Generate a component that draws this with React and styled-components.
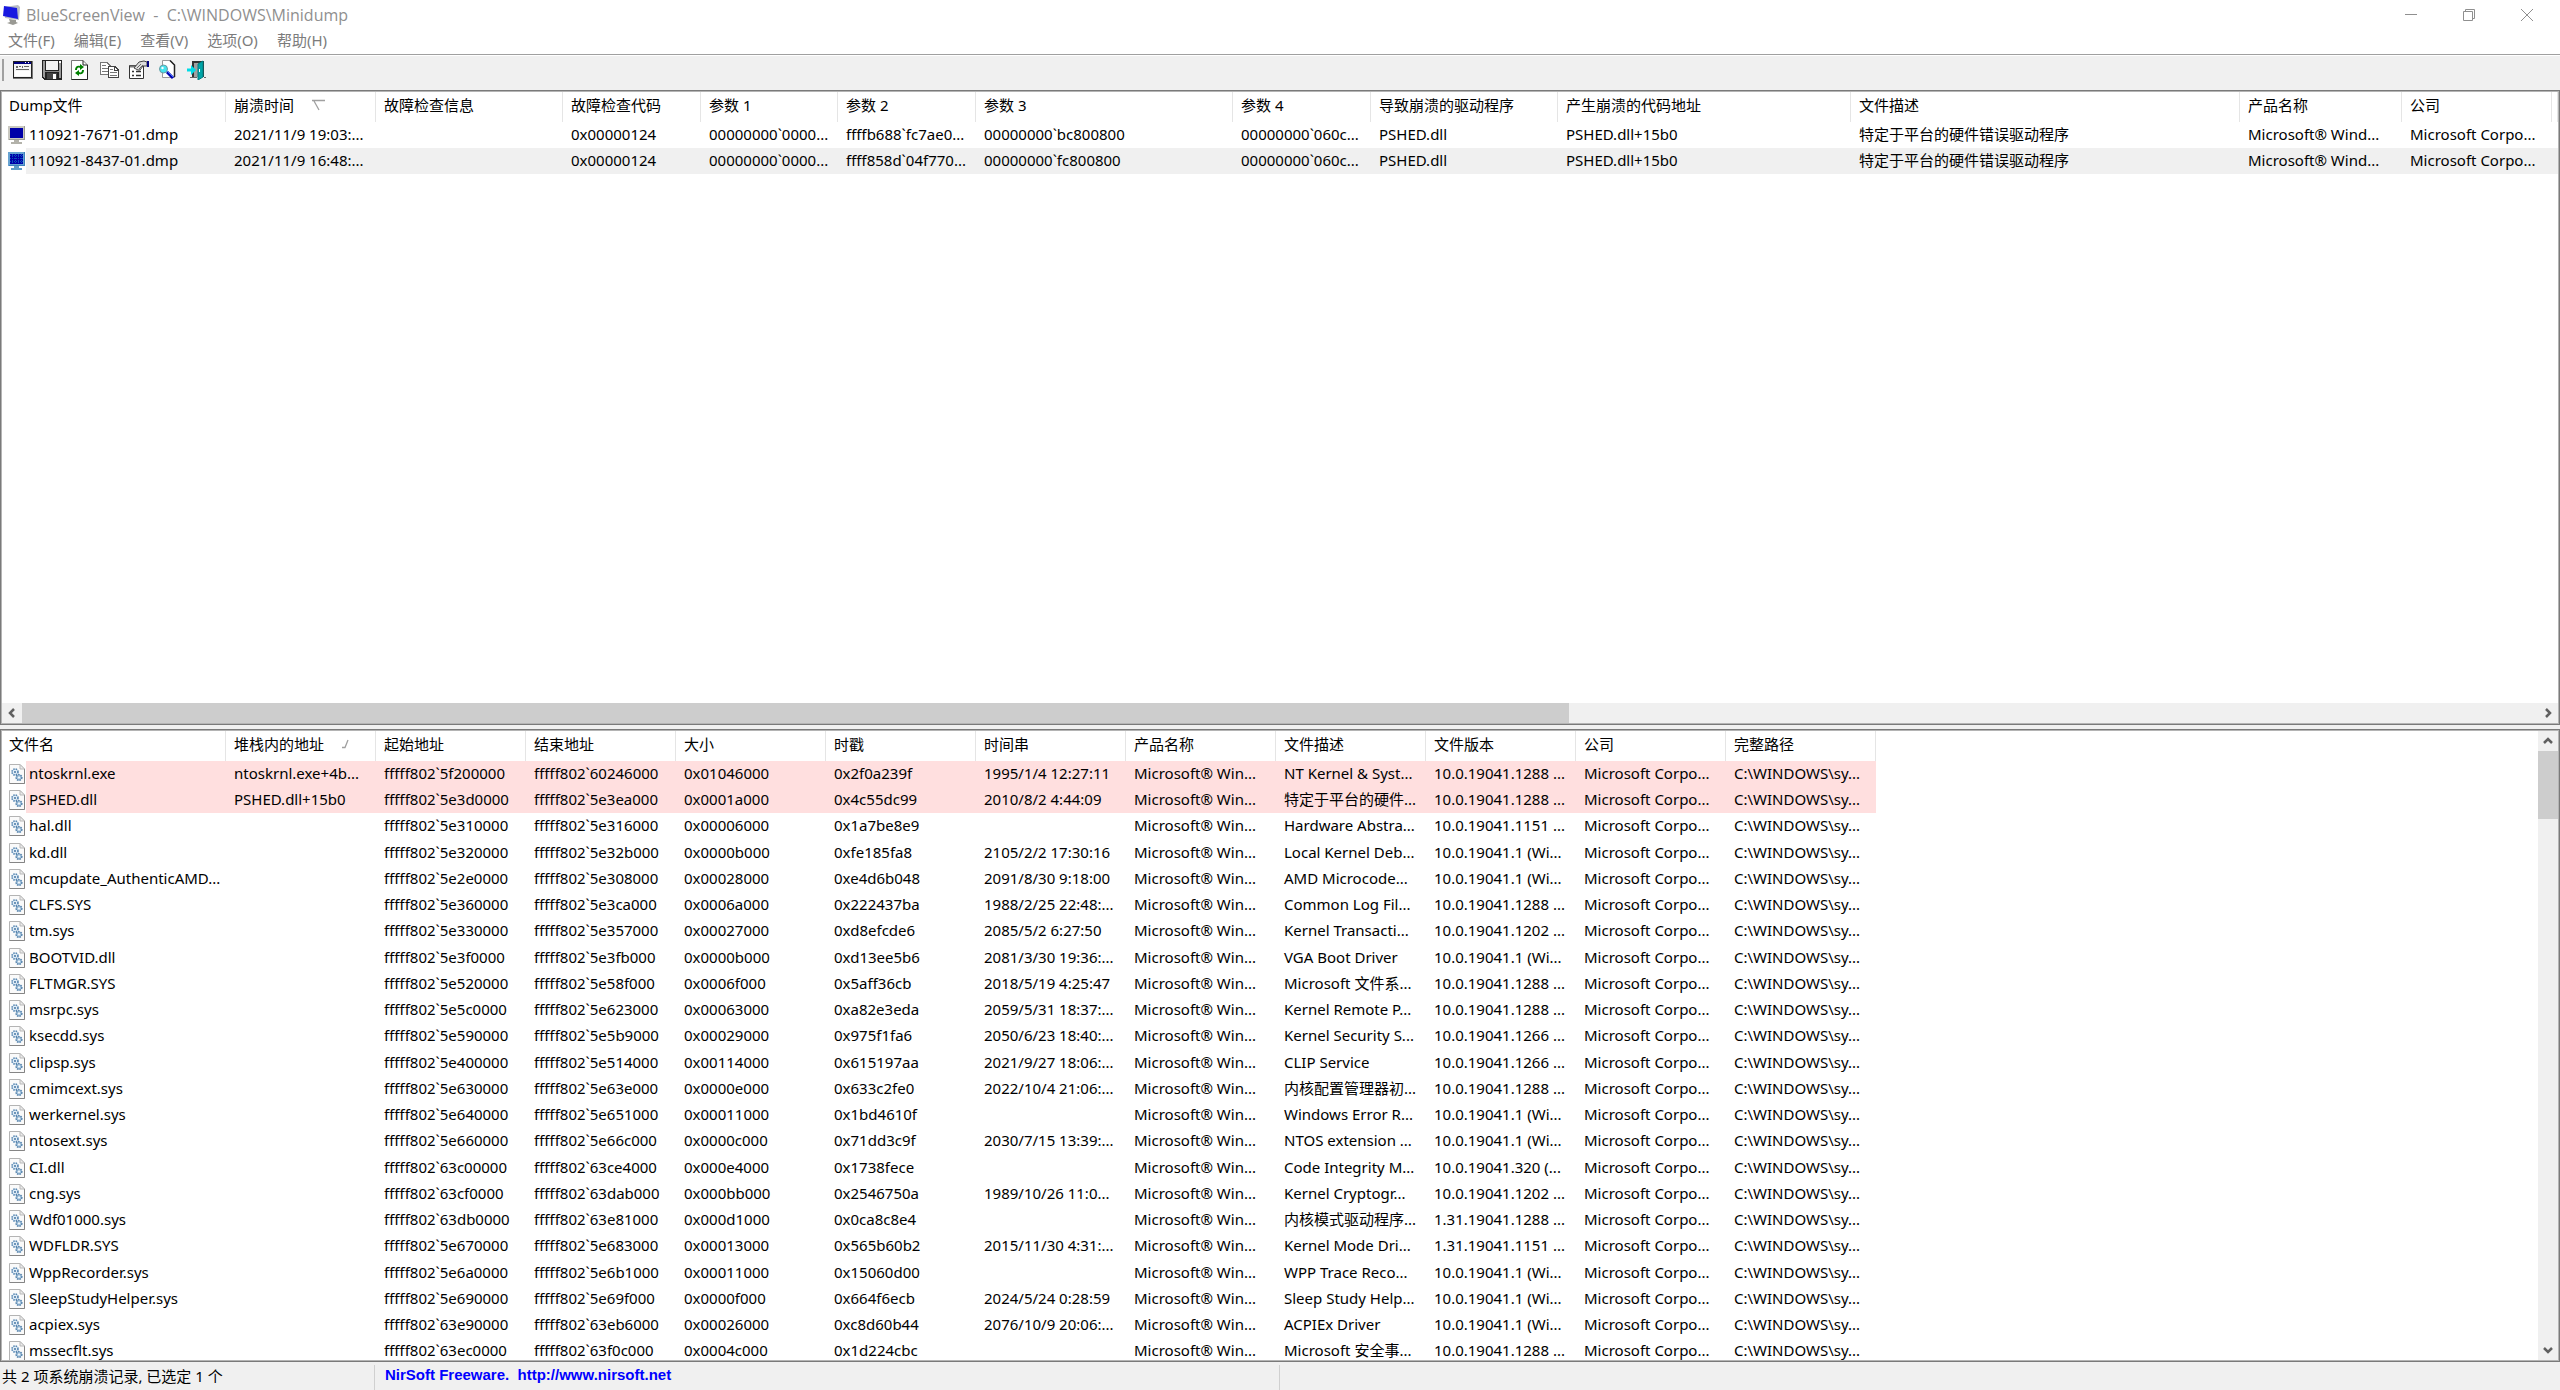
import React from "react"
import styled, { createGlobalStyle } from "styled-components"

const GlobalStyle = createGlobalStyle`
  html,
  body {
    margin: 0px;
    padding: 0px;
  }
  button {
    font: inherit;
    color: inherit;
    border: none;
    background: none;
    padding: 0px;
  }
`

const Window = styled.div`
  display: flex;
  flex-direction: column;
  height: 100vh;
  overflow: hidden;
  background-color: #f0f0f0;
  color: #000000;
  font-family: "Noto Sans", "Noto Sans CJK SC", sans-serif;
  font-size: 15px;
`

const TitleBar = styled.header`
  display: flex;
  align-items: center;
  height: 29px;
  padding: 0px 4px 0px 3px;
  background-color: white;
  color: #8f8f8f;
`

const Title = styled.h1`
  flex: 1;
  margin: 0px;
  padding-left: 5px;
  font-family: "Open Sans", "Noto Sans CJK SC", sans-serif;
  font-size: 16px;
  font-weight: 400;
  line-height: 28px;
  white-space: pre;
`

const WindowButton = styled.button`
  display: flex;
  align-items: center;
  justify-content: center;
  width: 58px;
  height: 28px;
`

const MenuBar = styled.nav`
  display: flex;
  align-items: flex-start;
  gap: 19px;
  height: 25px;
  padding-left: 8px;
  background-color: white;
  border-bottom: 1px solid #a0a0a0;
  color: #7c7c7c;
  line-height: 22px;
`

const ToolBar = styled.div`
  display: flex;
  align-items: center;
  gap: 9px;
  height: 28px;
  padding: 0px 0px 6px 2px;
  border-top: 1px solid white;
`

const Grip = styled.div`
  width: 2px;
  height: 22px;
  background-color: #a0a0a0;
`

const ToolButton = styled.button`
  display: flex;
  width: 20px;
  height: 20px;
`

const Pane = styled.section`
  display: flex;
  flex-direction: ${props => (props.$vertical ? "row" : "column")};
  flex: ${props => props.$grow} 1 0px;
  min-height: 0px;
  padding: 1px;
  border: 1px solid #7a7a7a;
  background-color: #b4b4b4;
`

const Splitter = styled.div`
  height: 4px;
`

const ListArea = styled.div`
  flex: 1;
  min-width: 0px;
  min-height: 0px;
  overflow: hidden;
  background-color: white;
`

const Table = styled.table`
  table-layout: fixed;
  border-collapse: separate;
  border-spacing: 0px;
  width: ${props => (props.$fill ? "100%" : "1px")};
  white-space: pre;
`

const Col = styled.col`
  width: ${props => (props.$width ? `${props.$width}px` : "auto")};
`

const HeadCell = styled.th`
  box-sizing: border-box;
  height: 30px;
  padding: 0px 0px 4px 8px;
  border-right: 1px solid #e5e5e5;
  font-weight: 400;
  line-height: 24px;
  text-align: left;
  overflow: hidden;
  &:first-child {
    padding-left: 7px;
  }
`

const HeadLabel = styled.div`
  display: flex;
  align-items: center;
  gap: 18px;
`

const Row = styled.tr`
  --row-color: ${props => props.$color || "white"};
  height: 26px;
  &:nth-child(4n) {
    height: 27px;
  }
`

const Cell = styled.td`
  padding: 0px 0px 2px 8px;
  background-color: var(--row-color);
  line-height: 24px;
  overflow: hidden;
`

const NameCell = styled.td`
  padding: 0px 0px 0px 6px;
  overflow: hidden;
`

const NameContent = styled.div`
  display: flex;
  align-items: center;
`

const Name = styled.span`
  flex: 1;
  padding: 0px 0px 2px 3px;
  background-color: var(--row-color);
  line-height: 24px;
`

const ScrollBar = styled.div`
  display: flex;
  flex-direction: ${props => (props.$vertical ? "column" : "row")};
  ${props => (props.$vertical ? "width: 20px;" : "height: 20px;")}
  background-color: #f0f0f0;
`

const ScrollTrack = styled.div`
  display: flex;
  flex-direction: inherit;
  flex: 1;
`

const ScrollThumb = styled.div`
  flex-basis: ${props => props.$size};
  background-color: #cdcdcd;
`

const ScrollButton = styled.button`
  display: flex;
  align-items: center;
  justify-content: center;
  width: 20px;
  height: 20px;
`

const StatusBar = styled.footer`
  display: flex;
  height: 25px;
  padding-top: 3px;
  line-height: 22px;
`

const StatusPart = styled.div`
  box-sizing: border-box;
  width: ${props => props.$width}px;
  padding-left: ${props => props.$pad}px;
  border-right: 1px solid #d0d0d0;
  white-space: pre;
`

const StatusLink = styled.a`
  display: block;
  color: #0000ff;
  font-family: "Liberation Sans", sans-serif;
  font-size: 15px;
  font-weight: 700;
  line-height: 20px;
  text-decoration: none;
`

const AppIcon = () => (
  <svg width="18" height="20" viewBox="0 0 18 20">
    <path d="M1 2 15 0 17 2 16 15 2 13Z" fill="#b9bcc4" />
    <path d="M1 1 14 3 15 14 0 11Z" fill="#1818e0" />
    <path d="M6 14 13 15 13 17 15 18 10 20 4 18 7 17Z" fill="#9a9a94" />
  </svg>
)

const MonitorIcon = ({ selected }) => (
  <svg width="18" height="20" viewBox="0 0 18 20" shapeRendering="crispEdges">
    <path d="M0 1H17V15H0Z" fill={selected ? "#67a3d2" : "#c9c8c0"} />
    <path d="M16 1H17V15H1V14H16Z" fill={selected ? "#3d80bd" : "#9c9b94"} />
    <path d="M2 3H15V13H2Z" fill="#0000a8" />
    <path
      d="M6 15H11V17H14V19H3V17H6Z"
      fill={selected ? "#5f9bc8" : "#b3b2aa"}
    />
    {selected && (
      <path
        d="M2 4.500H15M2 7.500H15M2 10.500H15M4.500 3V13M7.500 3V13M10.500 3V13M13.500 3V13"
        stroke="#0b50bd"
        strokeDasharray="1 1"
      />
    )}
  </svg>
)

const FileIcon = () => (
  <svg width="18" height="20" viewBox="0 0 18 20">
    <path d="M1.500 .5H12L16.500 5V19.500H1.500Z" fill="#fafafa" stroke="#b4b4b4" />
    <path d="M16.500 5V19.500H1.500" fill="none" stroke="#858585" />
    <path d="M12 .5V5H16.500Z" fill="#ececec" stroke="#b8b8b8" />
    <circle
      cx="7"
      cy="8"
      r="3"
      fill="#e4eff8"
      stroke="#5686b2"
      strokeWidth="1.600"
      strokeDasharray="1.500 .9"
    />
    <circle cx="7" cy="8" r=".9" fill="#35699a" />
    <circle
      cx="11"
      cy="13.500"
      r="2.800"
      fill="#a8c6df"
      stroke="#5280aa"
      strokeWidth="1.600"
      strokeDasharray="1.500 .9"
    />
    <circle cx="11" cy="13.500" r=".9" fill="white" />
  </svg>
)

const WindowIcon = () => (
  <svg width="21" height="20" viewBox="0 0 21 20" shapeRendering="crispEdges">
    <path d="M0 1H21V19H0Z" fill="#777777" />
    <path d="M0 1H20V18H0Z" fill="#222222" />
    <path d="M1 2H19V17H1Z" fill="#f4f4f4" />
    <path d="M1 2H19V4H1Z" fill="#000080" />
    <path d="M13 2H14V3H13ZM16 2H17V3H16Z" fill="white" />
    <path
      d="M3 6H5V8H3ZM6 6H8V7H6ZM9 6H11V8H9ZM12 6H17V7H12ZM3 9H17V10H3Z"
      fill="#666666"
    />
    <path d="M2 11H18V16H2Z" fill="white" />
  </svg>
)

const SaveIcon = () => (
  <svg width="20" height="20" viewBox="0 0 20 20" shapeRendering="crispEdges">
    <path d="M0 0H20V20H2L0 18Z" fill="#222222" />
    <path d="M1 1H3V18H2L1 17ZM17 3H19V18H17Z" fill="#9a9a9a" />
    <path d="M4 1H16V10H4Z" fill="#f4f4f4" />
    <path d="M17 1H19V3H17Z" fill="white" />
    <path d="M3 11H17V12H3Z" fill="#888888" />
    <path d="M5 13H15V19H5Z" fill="#444444" />
    <path d="M11 14H14V19H11Z" fill="white" />
  </svg>
)

const RefreshIcon = () => (
  <svg width="18" height="20" viewBox="0 0 18 20">
    <path d="M.5 .5H12L16.500 5V19.500H.5Z" fill="white" stroke="#777777" />
    <path d="M12 .5V5H16.500V19.500H.5" fill="none" stroke="#222222" />
    <path d="M4 10C4 6 7 5 9 6V4L13 7 9 10V8C7 7 6 8 6 10Z" fill="#008000" />
    <path
      d="M13 10C13 14 10 15 8 14V16L4 13 8 10V12C10 13 11 12 11 10Z"
      fill="#008000"
    />
  </svg>
)

const CopyIcon = () => (
  <svg width="20" height="20" viewBox="0 0 20 20" shapeRendering="crispEdges">
    <path d="M.5 2.500H7L11.500 7V14.500H.5Z" fill="white" stroke="#777777" />
    <path d="M2 5.500H6M2 8.500H9M2 11.500H9" stroke="#777777" />
    <path d="M8.500 6.500H15L18.500 10V17.500H8.500Z" fill="white" stroke="#444444" />
    <path d="M14.500 6.500V10.500H18" fill="none" stroke="#444444" />
    <path d="M10 9.500H13M10 12.500H17M10 15.500H17" stroke="#777777" />
  </svg>
)

const PropertiesIcon = () => (
  <svg width="20" height="20" viewBox="0 0 20 20">
    <path d="M.5 5.500H14.500V18.500H.5Z" fill="white" stroke="#333333" />
    <path d="M1 6.500H8" stroke="#777777" strokeWidth="2" />
    <path
      d="M3 11.500H5M7 11.500H12M3 15.500H5M7 15.500H12"
      stroke="#333333"
      strokeWidth="1.500"
    />
    <path
      d="M5 8 10 2 15 1 18 2V6L14 6 11 10 9 10Z"
      fill="#dcdcdc"
      stroke="#444444"
    />
    <path d="M8 8 12 4M10 9 14 5" stroke="#666666" />
    <path d="M18 1H20V7H18Z" fill="#000080" />
  </svg>
)

const FindIcon = () => (
  <svg width="20" height="20" viewBox="0 0 20 20">
    <path d="M4.500 .5H12L16.500 5V17.500H4.500Z" fill="white" stroke="#999999" />
    <path d="M12 .5 16.500 5V17" fill="none" stroke="#222222" strokeWidth="1.500" />
    <path d="M9 12 15 18" stroke="#0000b0" strokeWidth="3" />
    <path d="M9 11 15 17" stroke="#3f6fff" />
    <circle cx="5.500" cy="9" r="4" fill="#46e4ee" stroke="#6a9aa2" />
    <circle cx="4.500" cy="8" r="1.200" fill="white" />
  </svg>
)

const ExitIcon = () => (
  <svg width="20" height="20" viewBox="0 0 20 20">
    <path d="M5 1H17V17H5Z" fill="#333333" />
    <path d="M7 3H12V17H7Z" fill="#a0a0a0" />
    <path d="M11 4 16 1V17L11 20Z" fill="#00a5a8" stroke="#007f82" />
    <path d="M12.500 9V12" stroke="#ffffff" />
    <path d="M3 17.500H10M17 17.500H19" stroke="#666666" />
    <path d="M0 8.500H4V5L9 10 4 15V11.500H0Z" fill="#00dce6" />
  </svg>
)

const MinimizeIcon = () => (
  <svg width="12" height="12" viewBox="0 0 12 12">
    <path d="M0 5.500H12" stroke="#8f8f8f" />
  </svg>
)

const RestoreIcon = () => (
  <svg width="12" height="12" viewBox="0 0 12 12">
    <path
      d="M.5 2.500H9.500V11.500H.5ZM2.500 2.500V.5H11.500V9.500H9.500"
      fill="none"
      stroke="#8f8f8f"
    />
  </svg>
)

const CloseIcon = () => (
  <svg width="12" height="12" viewBox="0 0 12 12">
    <path d="M0 0 12 12M12 0 0 12" stroke="#8f8f8f" />
  </svg>
)

const arrows = {
  left: "M7 1 3 5 7 9",
  right: "M3 1 7 5 3 9",
  up: "M1 7 5 3 9 7",
  down: "M1 3 5 7 9 3",
}

const Arrow = ({ to }) => (
  <svg width="10" height="10" viewBox="0 0 10 10">
    <path d={arrows[to]} fill="none" stroke="#606060" strokeWidth="2.500" />
  </svg>
)

const SortMark = ({ type }) => (
  <svg width="13" height="12" viewBox="0 0 13 12">
    <path
      d={type === "down" ? "M0 1.500H13M2 2 7 11" : "M6 2 3 9.500H0"}
      fill="none"
      stroke="#a0a0a0"
      strokeWidth="1.300"
    />
  </svg>
)

const menus = ["文件(F)", "编辑(E)", "查看(V)", "选项(O)", "帮助(H)"]

const tools = [
  ["高级选项", WindowIcon],
  ["保存", SaveIcon],
  ["刷新", RefreshIcon],
  ["复制", CopyIcon],
  ["属性", PropertiesIcon],
  ["查找", FindIcon],
  ["退出", ExitIcon],
]

const dumpColumns = [
  ["Dump文件", 224],
  ["崩溃时间", 150, "down"],
  ["故障检查信息", 187],
  ["故障检查代码", 138],
  ["参数 1", 137],
  ["参数 2", 138],
  ["参数 3", 257],
  ["参数 4", 138],
  ["导致崩溃的驱动程序", 187],
  ["产生崩溃的代码地址", 293],
  ["文件描述", 389],
  ["产品名称", 162],
  ["公司", 150],
  ["", 0],
]

const driver = ["PSHED.dll", "PSHED.dll+15b0", "特定于平台的硬件错误驱动程序", "Microsoft® Wind...", "Microsoft Corpo...", ""]

const dumps = [
  ["110921-7671-01.dmp", "2021/11/9 19:03:...", "", "0x00000124", "00000000`0000...", "ffffb688`fc7ae0...", "00000000`bc800800", "00000000`060c...", ...driver],
  ["110921-8437-01.dmp", "2021/11/9 16:48:...", "", "0x00000124", "00000000`0000...", "ffff858d`04f770...", "00000000`fc800800", "00000000`060c...", ...driver],
]

const moduleColumns = [
  ["文件名", 224],
  ["堆栈内的地址", 150, "up"],
  ["起始地址", 150],
  ["结束地址", 150],
  ["大小", 150],
  ["时戳", 150],
  ["时间串", 150],
  ["产品名称", 150],
  ["文件描述", 150],
  ["文件版本", 150],
  ["公司", 150],
  ["完整路径", 150],
]

// name, address in stack, from, to, size, timestamp, time string, description, version
const modules = [
  ["ntoskrnl.exe", "ntoskrnl.exe+4b...", "5f200000", "60246000", "01046000", "2f0a239f", "1995/1/4 12:27:11", "NT Kernel & Syst...", "10.0.19041.1288 ..."],
  ["PSHED.dll", "PSHED.dll+15b0", "5e3d0000", "5e3ea000", "0001a000", "4c55dc99", "2010/8/2 4:44:09", "特定于平台的硬件...", "10.0.19041.1288 ..."],
  ["hal.dll", "", "5e310000", "5e316000", "00006000", "1a7be8e9", "", "Hardware Abstra...", "10.0.19041.1151 ..."],
  ["kd.dll", "", "5e320000", "5e32b000", "0000b000", "fe185fa8", "2105/2/2 17:30:16", "Local Kernel Deb...", "10.0.19041.1 (Wi..."],
  ["mcupdate_AuthenticAMD...", "", "5e2e0000", "5e308000", "00028000", "e4d6b048", "2091/8/30 9:18:00", "AMD Microcode...", "10.0.19041.1 (Wi..."],
  ["CLFS.SYS", "", "5e360000", "5e3ca000", "0006a000", "222437ba", "1988/2/25 22:48:...", "Common Log Fil...", "10.0.19041.1288 ..."],
  ["tm.sys", "", "5e330000", "5e357000", "00027000", "d8efcde6", "2085/5/2 6:27:50", "Kernel Transacti...", "10.0.19041.1202 ..."],
  ["BOOTVID.dll", "", "5e3f0000", "5e3fb000", "0000b000", "d13ee5b6", "2081/3/30 19:36:...", "VGA Boot Driver", "10.0.19041.1 (Wi..."],
  ["FLTMGR.SYS", "", "5e520000", "5e58f000", "0006f000", "5aff36cb", "2018/5/19 4:25:47", "Microsoft 文件系...", "10.0.19041.1288 ..."],
  ["msrpc.sys", "", "5e5c0000", "5e623000", "00063000", "a82e3eda", "2059/5/31 18:37:...", "Kernel Remote P...", "10.0.19041.1288 ..."],
  ["ksecdd.sys", "", "5e590000", "5e5b9000", "00029000", "975f1fa6", "2050/6/23 18:40:...", "Kernel Security S...", "10.0.19041.1266 ..."],
  ["clipsp.sys", "", "5e400000", "5e514000", "00114000", "615197aa", "2021/9/27 18:06:...", "CLIP Service", "10.0.19041.1266 ..."],
  ["cmimcext.sys", "", "5e630000", "5e63e000", "0000e000", "633c2fe0", "2022/10/4 21:06:...", "内核配置管理器初...", "10.0.19041.1288 ..."],
  ["werkernel.sys", "", "5e640000", "5e651000", "00011000", "1bd4610f", "", "Windows Error R...", "10.0.19041.1 (Wi..."],
  ["ntosext.sys", "", "5e660000", "5e66c000", "0000c000", "71dd3c9f", "2030/7/15 13:39:...", "NTOS extension ...", "10.0.19041.1 (Wi..."],
  ["CI.dll", "", "63c00000", "63ce4000", "000e4000", "1738fece", "", "Code Integrity M...", "10.0.19041.320 (..."],
  ["cng.sys", "", "63cf0000", "63dab000", "000bb000", "2546750a", "1989/10/26 11:0...", "Kernel Cryptogr...", "10.0.19041.1202 ..."],
  ["Wdf01000.sys", "", "63db0000", "63e81000", "000d1000", "0ca8c8e4", "", "内核模式驱动程序...", "1.31.19041.1288 ..."],
  ["WDFLDR.SYS", "", "5e670000", "5e683000", "00013000", "565b60b2", "2015/11/30 4:31:...", "Kernel Mode Dri...", "1.31.19041.1151 ..."],
  ["WppRecorder.sys", "", "5e6a0000", "5e6b1000", "00011000", "15060d00", "", "WPP Trace Reco...", "10.0.19041.1 (Wi..."],
  ["SleepStudyHelper.sys", "", "5e690000", "5e69f000", "0000f000", "664f6ecb", "2024/5/24 0:28:59", "Sleep Study Help...", "10.0.19041.1 (Wi..."],
  ["acpiex.sys", "", "63e90000", "63eb6000", "00026000", "c8d60b44", "2076/10/9 20:06:...", "ACPIEx Driver", "10.0.19041.1 (Wi..."],
  ["mssecflt.sys", "", "63ec0000", "63f0c000", "0004c000", "1d224cbc", "", "Microsoft 安全事...", "10.0.19041.1288 ..."],
]

const toModuleRow = ([name, stack, from, to, size, stamp, time, description, version]) => [
  name,
  stack,
  `fffff802\`${from}`,
  `fffff802\`${to}`,
  `0x${size}`,
  `0x${stamp}`,
  time,
  "Microsoft® Win...",
  description,
  version,
  "Microsoft Corpo...",
  "C:\\WINDOWS\\sy...",
]

const List = ({ columns, rows, fill, colorOf, iconOf }) => (
  <Table $fill={fill}>
    <colgroup>
      {columns.map(([label, width]) => (
        <Col key={label} $width={width} />
      ))}
    </colgroup>
    <thead>
      <tr>
        {columns.map(([label, , sort]) => (
          <HeadCell key={label} scope="col">
            <HeadLabel>
              {label}
              {sort && <SortMark type={sort} />}
            </HeadLabel>
          </HeadCell>
        ))}
      </tr>
    </thead>
    <tbody>
      {rows.map(([name, ...values], index) => (
        <Row key={name} $color={colorOf(index)}>
          <NameCell>
            <NameContent>
              {iconOf(index)}
              <Name>{name}</Name>
            </NameContent>
          </NameCell>
          {values.map((value, i) => (
            <Cell key={i}>{value}</Cell>
          ))}
        </Row>
      ))}
    </tbody>
  </Table>
)

export default () => {
  return (
    <Window>
      <GlobalStyle />
      <TitleBar>
        <AppIcon />
        <Title>{"BlueScreenView  -  C:\\WINDOWS\\Minidump"}</Title>
        <WindowButton aria-label="最小化">
          <MinimizeIcon />
        </WindowButton>
        <WindowButton aria-label="还原">
          <RestoreIcon />
        </WindowButton>
        <WindowButton aria-label="关闭">
          <CloseIcon />
        </WindowButton>
      </TitleBar>
      <MenuBar>
        {menus.map(menu => (
          <button key={menu}>{menu}</button>
        ))}
      </MenuBar>
      <ToolBar>
        <Grip />
        {tools.map(([label, Icon]) => (
          <ToolButton key={label} aria-label={label}>
            <Icon />
          </ToolButton>
        ))}
      </ToolBar>
      <Pane $grow={636}>
        <ListArea>
          <List
            columns={dumpColumns}
            rows={dumps}
            fill
            colorOf={index => (index === 1 ? "#f0f0f0" : "white")}
            iconOf={index => <MonitorIcon selected={index === 1} />}
          />
        </ListArea>
        <ScrollBar>
          <ScrollButton aria-label="向左滚动">
            <Arrow to="left" />
          </ScrollButton>
          <ScrollTrack>
            <ScrollThumb $size="61.5%" />
          </ScrollTrack>
          <ScrollButton aria-label="向右滚动">
            <Arrow to="right" />
          </ScrollButton>
        </ScrollBar>
      </Pane>
      <Splitter />
      <Pane $grow={633} $vertical>
        <ListArea>
          <List
            columns={moduleColumns}
            rows={modules.map(toModuleRow)}
            colorOf={index => (index < 2 ? "#ffdfdf" : "white")}
            iconOf={() => <FileIcon />}
          />
        </ListArea>
        <ScrollBar $vertical>
          <ScrollButton aria-label="向上滚动">
            <Arrow to="up" />
          </ScrollButton>
          <ScrollTrack>
            <ScrollThumb $size="11.5%" />
          </ScrollTrack>
          <ScrollButton aria-label="向下滚动">
            <Arrow to="down" />
          </ScrollButton>
        </ScrollBar>
      </Pane>
      <StatusBar>
        <StatusPart $width={375} $pad={2}>
          共 2 项系统崩溃记录, 已选定 1 个
        </StatusPart>
        <StatusPart $width={905} $pad={10}>
          <StatusLink href="http://www.nirsoft.net">
            {"NirSoft Freeware.  http://www.nirsoft.net"}
          </StatusLink>
        </StatusPart>
      </StatusBar>
    </Window>
  )
}
